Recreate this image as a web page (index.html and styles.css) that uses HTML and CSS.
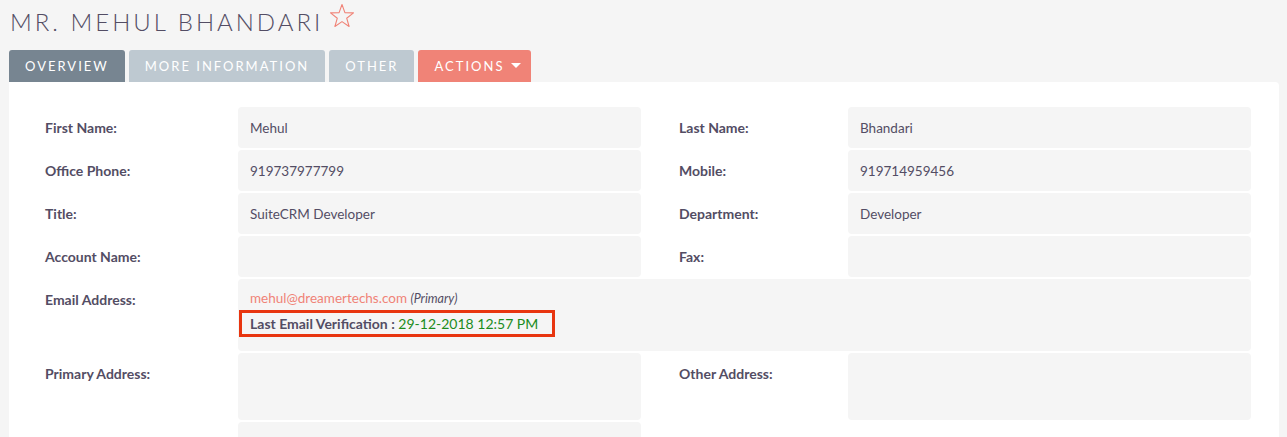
FILE: index.html
```html
<!DOCTYPE html>
<html>
<head>
<meta charset="utf-8">
<link rel="stylesheet" href="styles.css">
</head>
<body>
<div class="page">
  <h1 class="title">MR. MEHUL BHANDARI<svg class="star" width="26" height="26" viewBox="0 0 26 26"><polygon points="13,1.5 15.9,9.6 24.5,9.9 17.7,15.2 20.1,23.5 13,18.6 5.9,23.5 8.3,15.2 1.5,9.9 10.1,9.6" fill="none" stroke="#f08377" stroke-width="1.1" stroke-linejoin="round"/></svg></h1>
  <div class="tabs">
    <div class="tab tab-active">OVERVIEW</div>
    <div class="tab">MORE INFORMATION</div>
    <div class="tab">OTHER</div>
    <div class="tab tab-actions">ACTIONS<span class="caret"></span></div>
  </div>
  <div class="panel">
    <div class="grid">
      <div class="label">First Name:</div>
      <div class="value">Mehul</div>
      <div class="label label-r">Last Name:</div>
      <div class="value">Bhandari</div>

      <div class="label">Office Phone:</div>
      <div class="value">919737977799</div>
      <div class="label label-r">Mobile:</div>
      <div class="value">919714959456</div>

      <div class="label">Title:</div>
      <div class="value">SuiteCRM Developer</div>
      <div class="label label-r">Department:</div>
      <div class="value">Developer</div>

      <div class="label">Account Name:</div>
      <div class="value"></div>
      <div class="label label-r">Fax:</div>
      <div class="value"></div>

      <div class="label">Email Address:</div>
      <div class="value value-wide">
        <div class="email-line"><span class="email">mehul@dreamertechs.com</span> <em class="primary">(Primary)</em></div>
        <div class="verify"><b>Last Email Verification :</b> <span class="date">29-12-2018 12:57 PM</span></div>
      </div>

      <div class="label">Primary Address:</div>
      <div class="value"></div>
      <div class="label label-r">Other Address:</div>
      <div class="value"></div>

      <div class="label"></div>
      <div class="value"></div>
      <div class="label label-r"></div>
      <div class="blank"></div>
    </div>
  </div>
</div>
</body>
</html>
```

FILE: styles.css
```css
html, body {
  margin: 0;
  padding: 0;
  background: #f5f5f5;
  font-family: Lato, "Open Sans", sans-serif;
  color: #534d64;
  overflow: hidden;
}
.page {
  padding: 0 8px 0 9px;
  height: 437px;
}
.title {
  margin: 0;
  padding: 8px 0 0 1px;
  height: 50px;
  box-sizing: border-box;
  font-weight: 300;
  font-size: 24px;
  letter-spacing: 3px;
  line-height: 28px;
  color: #534d64;
  display: flex;
  align-items: flex-start;
}
.star {
  margin: -5px 0 0 6px;
}
.tabs {
  display: flex;
  gap: 4px;
  height: 32px;
}
.tab {
  background: #bec9d1;
  color: #fff;
  font-size: 13px;
  letter-spacing: 2px;
  padding: 0 16px;
  line-height: 32px;
  border-radius: 3px 3px 0 0;
  display: flex;
  align-items: center;
}
.tab-active {
  background: #778591;
}
.tab-actions {
  background: #f08377;
  padding-right: 10px;
}
.caret {
  display: inline-block;
  width: 0;
  height: 0;
  border-left: 5px solid transparent;
  border-right: 5px solid transparent;
  border-top: 5px solid #fff;
  margin-left: 7px;
  margin-top: -1px;
}
.panel {
  background: #fff;
  border-radius: 0 4px 0 0;
  width: 1270px;
  height: 400px;
  padding-top: 25px;
  box-sizing: border-box;
}
.grid {
  display: grid;
  grid-template-columns: 229px 403px 207px 403px;
  grid-template-rows: 41px 41px 41px 41px 72px 67px 41px;
  row-gap: 2px;
}
.label {
  font-weight: 700;
  font-size: 14px;
  padding: 14px 0 0 36px;
  line-height: 14px;
}
.label-r {
  padding-left: 38px;
}
.value {
  background: #f5f5f5;
  border-radius: 4px;
  font-size: 13.5px;
  padding: 14px 12px 0 12px;
  line-height: 14px;
}
.value-wide {
  grid-column: 2 / 5;
}
.email-line {
  margin-top: -2px;
}
.email {
  color: #f08377;
}
.primary {
  font-size: 12.5px;
}
.verify {
  display: inline-block;
  margin: 4px 0 0 -11px;
  border: 3px solid #e8350f;
  padding: 3px 14px 3px 8px;
  font-size: 14px;
  line-height: 15px;
}
.verify b {
  color: #534d64;
}
.date {
  color: #1c8c1c;
}
```
